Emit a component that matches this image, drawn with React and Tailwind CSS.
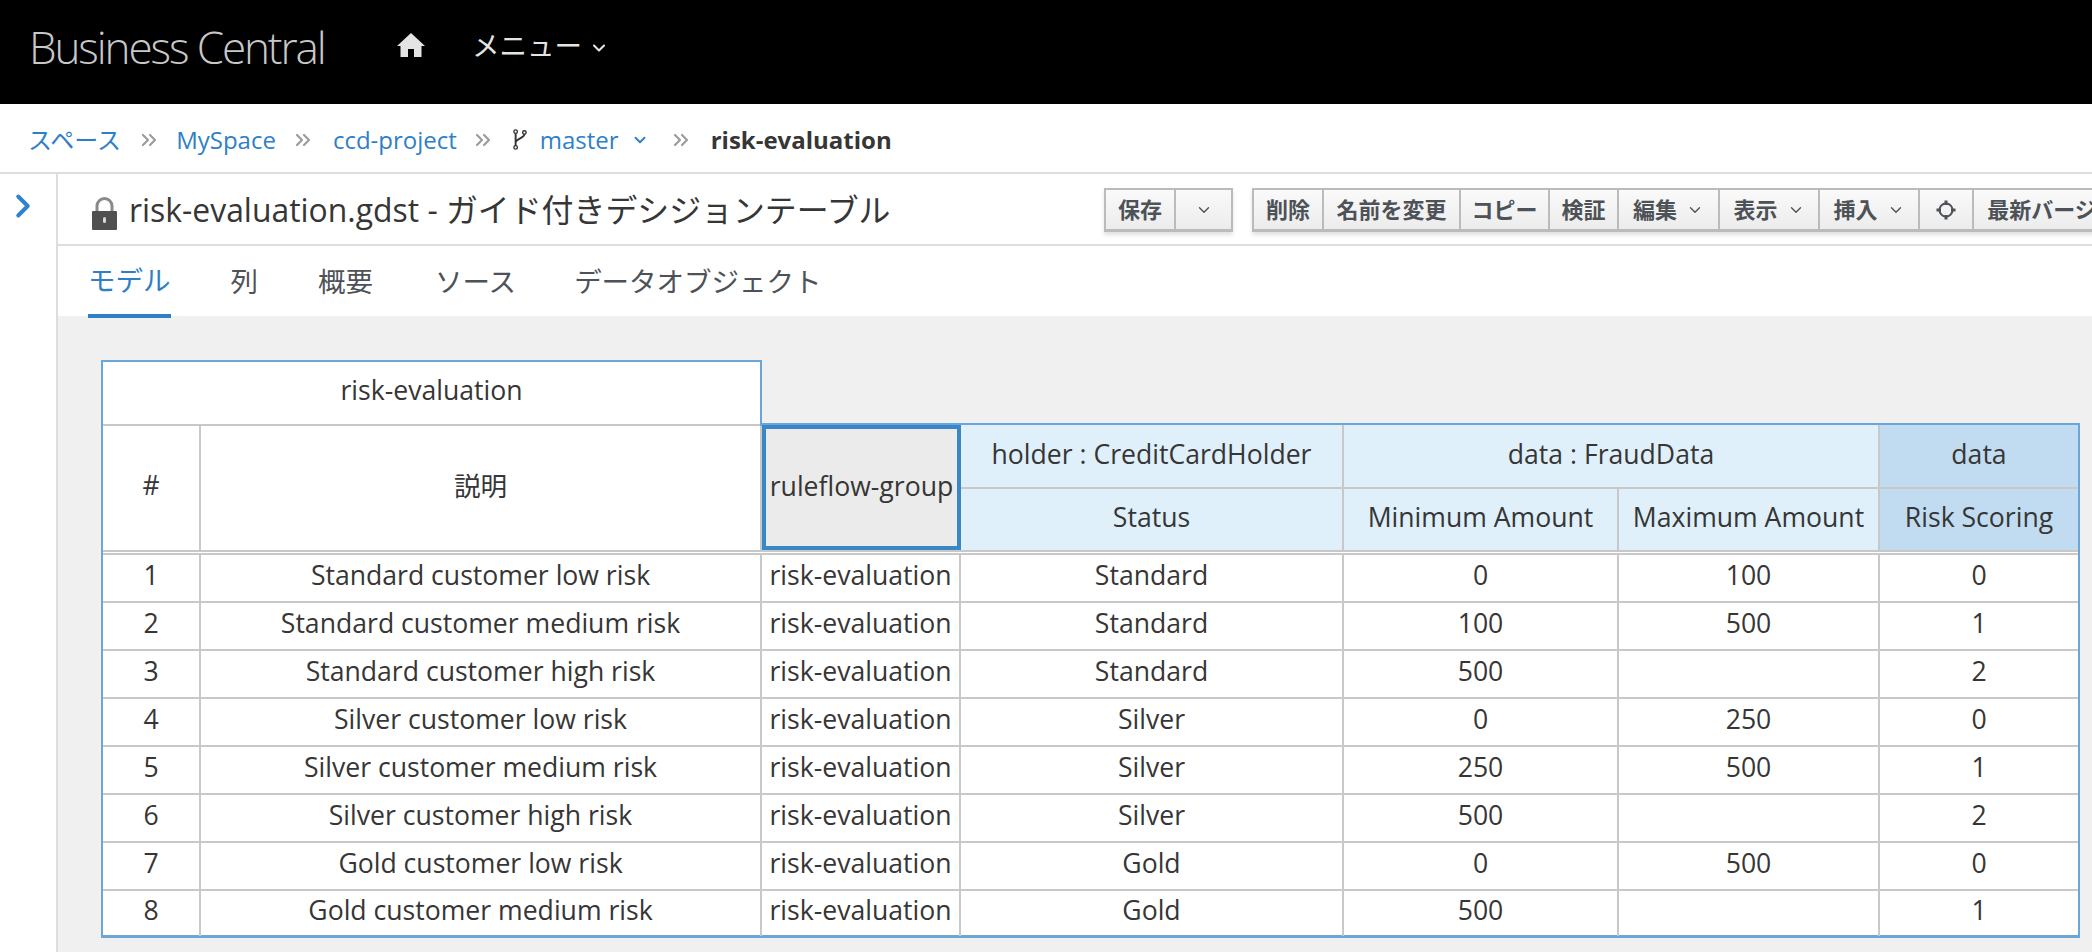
import React from 'react';
import { ChevronDown, ChevronRight, ChevronsRight } from 'lucide-react';

const sans = { fontFamily: '"Open Sans", "Noto Sans CJK JP", sans-serif' };

const rows = [
    ['1', 'Standard customer low risk', 'Standard', '0', '100', '0'],
    ['2', 'Standard customer medium risk', 'Standard', '100', '500', '1'],
    ['3', 'Standard customer high risk', 'Standard', '500', '', '2'],
    ['4', 'Silver customer low risk', 'Silver', '0', '250', '0'],
    ['5', 'Silver customer medium risk', 'Silver', '250', '500', '1'],
    ['6', 'Silver customer high risk', 'Silver', '500', '', '2'],
    ['7', 'Gold customer low risk', 'Gold', '0', '500', '0'],
    ['8', 'Gold customer medium risk', 'Gold', '500', '', '1'],
];

const HomeIcon = () => (
    <svg viewBox="0 0 28 24" className="w-[28px] h-[24px] fill-[#e4e4e4]">
        <path d="M14 0 L28 13 L24.5 13 L24.5 24 L17 24 L17 16 L11 16 L11 24 L3.5 24 L3.5 13 L0 13 Z" />
    </svg>
);

const BranchIcon = () => (
    <svg viewBox="0 0 16 24" className="w-[14px] h-[21px] fill-none stroke-[#333] stroke-[1.6]">
        <circle cx="3" cy="3" r="2" />
        <circle cx="13" cy="4" r="2" />
        <circle cx="3" cy="21" r="2" />
        <path d="M3 5 V19 M13 6 C13 10 4 11 3 15" strokeWidth="2.2" />
    </svg>
);

const LockIcon = () => (
    <svg viewBox="0 0 25 33" className="w-[25px] h-[33px]">
        <path d="M5 15 V9 A7.5 7.5 0 0 1 20 9 V15" fill="none" stroke="#8a8a8a" strokeWidth="3" />
        <rect x="0" y="14" width="25" height="19" rx="1" fill="#505050" />
        <rect x="11" y="20" width="3" height="6" rx="1.5" fill="#d8d8d8" />
    </svg>
);

const TargetIcon = () => (
    <svg viewBox="0 0 20 20" className="w-[20px] h-[20px] fill-none stroke-[#4d5258]">
        <circle cx="10" cy="10" r="6.5" strokeWidth="2" />
        <path d="M10 0.5 V5 M10 15 V19.5 M0.5 10 H5 M15 10 H19.5" strokeWidth="3" />
    </svg>
);

const Sep = () => <ChevronsRight className="w-[24px] h-[24px] text-[#9c9c9c] shrink-0" strokeWidth={2.2} />;

const ToolButton = ({ className, children }) => (
    <div className={`h-full flex items-center justify-center gap-[9px] border-r-2 border-[#bbbbbb] last:border-r-0 shrink-0 ${className}`}>
        {children}
    </div>
);

const Caret = () => <ChevronDown className="w-[18px] h-[18px] text-[#4d5258]" strokeWidth={1.8} />;

const Cell = ({ className = '', children }) => (
    <div className={`flex items-center justify-center border-r-2 border-[#c8c8c8] last:border-r-0 pb-[5px] ${className}`}>
        {children}
    </div>
);

const App = () => {
    return (
        <div className="w-[2092px] h-[952px] overflow-hidden bg-white flex flex-col" style={sans}>
            <header className="h-[104px] shrink-0 bg-black flex items-start text-[#e4e4e4]">
                <span className="ml-[29px] mt-[18px] w-[368px] text-[44px] leading-[58px] font-light tracking-[-2.1px] text-[#c8c8c8] whitespace-nowrap">Business Central</span>
                <span className="mt-[33px]"><HomeIcon /></span>
                <span className="ml-[47px] mt-[26px] text-[27.5px] leading-[40px]">メニュー</span>
                <ChevronDown className="ml-[7px] mt-[38px] w-[20px] h-[20px]" strokeWidth={2.5} />
            </header>

            <nav className="h-[68px] shrink-0 flex items-center pl-[28px] pt-[3px] text-[24px] text-[#2f7fc7]">
                <span>スペース</span>
                <span className="ml-[16px]"><Sep /></span>
                <span className="ml-[15px]">MySpace</span>
                <span className="ml-[15px]"><Sep /></span>
                <span className="ml-[18px]">ccd-project</span>
                <span className="ml-[14px]"><Sep /></span>
                <span className="ml-[18px]"><BranchIcon /></span>
                <span className="ml-[13px]">master</span>
                <ChevronDown className="ml-[12px] w-[18px] h-[18px]" strokeWidth={2.5} />
                <span className="ml-[20px]"><Sep /></span>
                <span className="ml-[18px] font-bold text-[#363636]">risk-evaluation</span>
            </nav>

            <div className="flex-1 flex border-t-2 border-[#dddddd]">
                <aside className="w-[58px] shrink-0 border-r-2 border-[#dddddd] flex justify-start pl-[4px] pt-[13px]">
                    <ChevronRight className="w-[38px] h-[38px] text-[#2f82cc]" strokeWidth={2.5} />
                </aside>

                <main className="flex-1 flex flex-col min-w-0">
                    <div className="h-[72px] shrink-0 border-b-2 border-[#dddddd] flex items-start">
                        <span className="ml-[34px] mt-[23px] shrink-0"><LockIcon /></span>
                        <h1 className="ml-[12px] mt-[15px] w-[975px] shrink-0 text-[31.9px] leading-[42px] text-[#363636] whitespace-nowrap">risk-evaluation.gdst - ガイド付きデシジョンテーブル</h1>
                        <div className="mt-[14px] h-[44px] flex shrink-0 border-2 border-b-[3px] border-[#bbbbbb] bg-gradient-to-b from-[#fafafa] to-[#ececec] shadow-[0_3px_4px_rgba(0,0,0,0.12)] text-[22px] font-bold text-[#4d5258]">
                            <ToolButton className="w-[70px]">保存</ToolButton>
                            <ToolButton className="w-[55px]"><Caret /></ToolButton>
                        </div>
                        <div className="ml-[19px] mt-[14px] h-[44px] flex shrink-0 border-2 border-r-0 border-b-[3px] border-[#bbbbbb] bg-gradient-to-b from-[#fafafa] to-[#ececec] shadow-[0_3px_4px_rgba(0,0,0,0.12)] text-[22px] font-bold text-[#4d5258]">
                            <ToolButton className="w-[70px]">削除</ToolButton>
                            <ToolButton className="w-[137px]">名前を変更</ToolButton>
                            <ToolButton className="w-[89px]">コピー</ToolButton>
                            <ToolButton className="w-[69px]">検証</ToolButton>
                            <ToolButton className="w-[101px]">編集<Caret /></ToolButton>
                            <ToolButton className="w-[100px]">表示<Caret /></ToolButton>
                            <ToolButton className="w-[100px]">挿入<Caret /></ToolButton>
                            <ToolButton className="w-[54px]"><TargetIcon /></ToolButton>
                            <ToolButton className="w-[180px]">最新バージョン</ToolButton>
                        </div>
                    </div>

                    <div className="h-[70px] shrink-0 flex items-start pl-[30px] text-[27.5px] text-[#4d5258]">
                        <div className="relative h-[72px] flex items-center pt-[1px] border-b-4 border-[#2f7fc7] text-[#2f7fc7]">モデル</div>
                        <div className="ml-[60px] h-[70px] flex items-center pt-[2px]">列</div>
                        <div className="ml-[60px] h-[70px] flex items-center pt-[2px]">概要</div>
                        <div className="ml-[62px] h-[70px] flex items-center pt-[2px]">ソース</div>
                        <div className="ml-[58px] h-[70px] flex items-center pt-[2px]">データオブジェクト</div>
                    </div>

                    <div className="flex-1 bg-[#f0f0f0] pl-[43px] pt-[44px] text-[26.6px] text-[#363636]">
                        <div className="w-[1979px]">
                            <div className="flex h-[195px]">
                                <div className="w-[661px] flex flex-col border-l-2 border-[#6aa7d8]">
                                    <div className="h-[66px] -ml-[2px] w-[661px] bg-white border-2 border-b-0 border-[#6aa7d8] flex flex-col">
                                        <div className="flex-1 flex items-center justify-center pb-[4px]">risk-evaluation</div>
                                        <div className="h-[2px] bg-[#c8c8c8]" />
                                    </div>
                                    <div className="flex-1 flex bg-white border-b-[5px] border-double border-[#c8c8c8]">
                                        <Cell className="w-[98px] pb-[3px]">#</Cell>
                                        <div className="w-[561px] flex items-center justify-center border-r-2 border-[#c8c8c8] pb-[3px]">説明</div>
                                    </div>
                                </div>
                                <div className="w-[1318px] mt-[63px] border-t-2 border-r-2 border-[#6aa7d8] grid grid-cols-[199px_383px_275px_261px_198px] grid-rows-[64px_61px_5px]">
                                    <div className="row-span-2 bg-[#ebebeb] border-4 border-[#3a87c8] flex items-center justify-center pb-[3px] leading-none">ruleflow-group</div>
                                    <div className="bg-[#dff0fb] flex items-center justify-center border-r-2 border-b-2 border-[#c8c8c8] pb-[3px]">holder : CreditCardHolder</div>
                                    <div className="col-span-2 bg-[#dff0fb] flex items-center justify-center border-r-2 border-b-2 border-[#c8c8c8] pb-[3px]">data : FraudData</div>
                                    <div className="bg-[#c1dcf0] flex items-center justify-center border-b-2 border-[#c8c8c8] pb-[3px]">data</div>
                                    <div className="bg-[#dff0fb] flex items-center justify-center border-r-2 border-[#c8c8c8] pb-[3px]">Status</div>
                                    <div className="bg-[#dff0fb] flex items-center justify-center border-r-2 border-[#c8c8c8] pb-[3px]">Minimum Amount</div>
                                    <div className="bg-[#dff0fb] flex items-center justify-center border-r-2 border-[#c8c8c8] pb-[3px]">Maximum Amount</div>
                                    <div className="bg-[#c1dcf0] flex items-center justify-center pb-[3px]">Risk Scoring</div>
                                    <div className="col-span-5 border-b-[5px] border-double border-[#c8c8c8] bg-white" />
                                </div>
                            </div>
                            <div className="bg-white border-x-2 border-b-[3px] border-[#6aa7d8]">
                                {rows.map((row) => (
                                    <div key={row[0]} className="h-[48px] last:h-[44px] grid grid-cols-[98px_561px_199px_383px_275px_261px_198px] border-b-2 border-[#c8c8c8] last:border-b-0">
                                        <Cell>{row[0]}</Cell>
                                        <Cell>{row[1]}</Cell>
                                        <Cell>risk-evaluation</Cell>
                                        <Cell>{row[2]}</Cell>
                                        <Cell>{row[3]}</Cell>
                                        <Cell>{row[4]}</Cell>
                                        <Cell>{row[5]}</Cell>
                                    </div>
                                ))}
                            </div>
                        </div>
                    </div>
                </main>
            </div>
        </div>
    );
};

export default App;
